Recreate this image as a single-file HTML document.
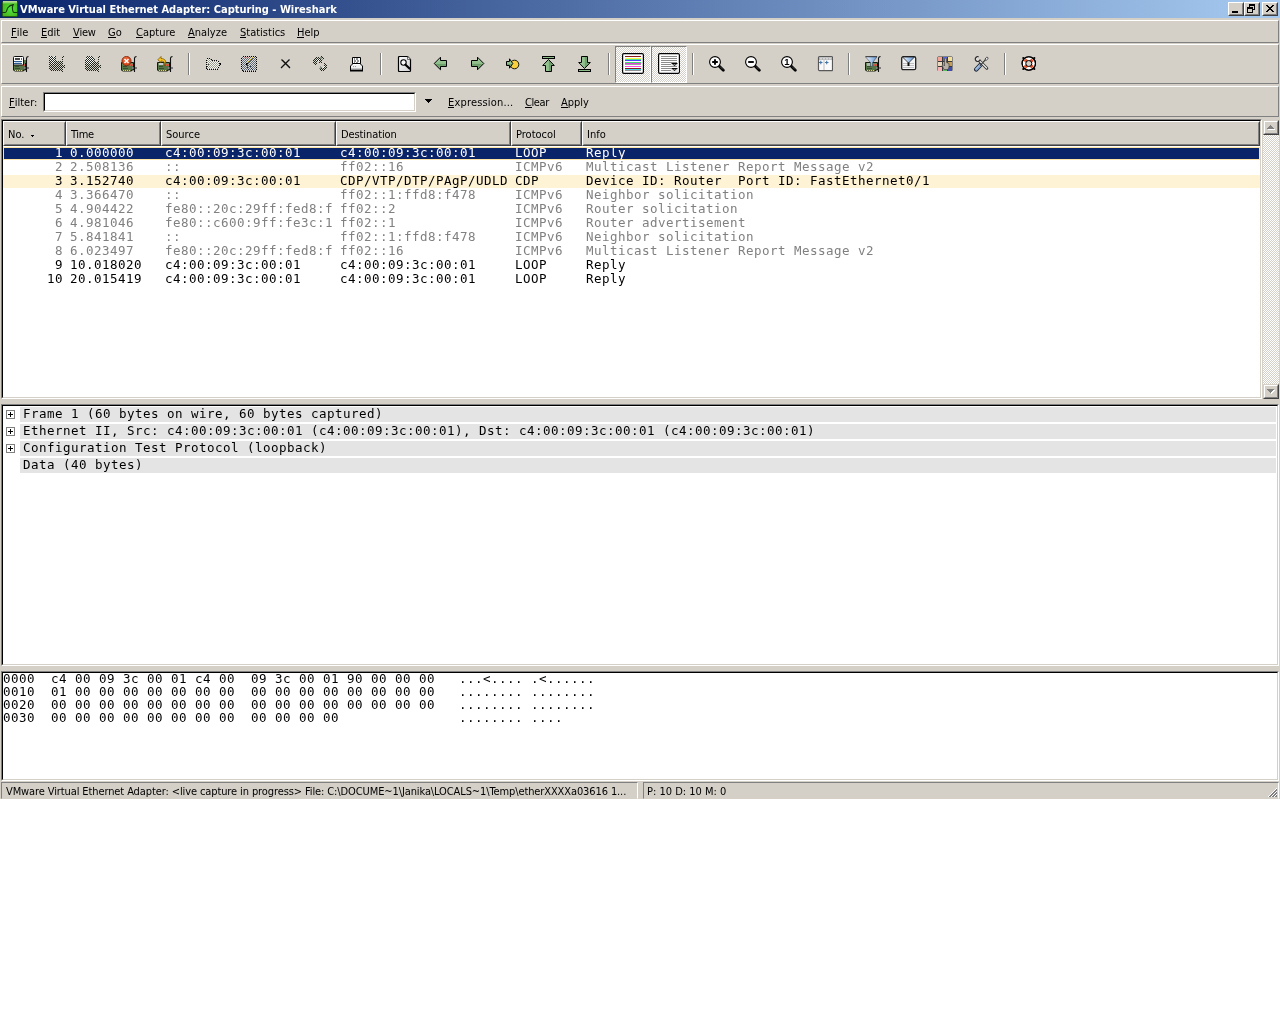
<!DOCTYPE html>
<html lang="en">
<head>
<meta charset="utf-8">
<title>VMware Virtual Ethernet Adapter: Capturing - Wireshark</title>
<style>
html,body{margin:0;padding:0;background:#fff;}
body{width:1280px;height:1024px;overflow:hidden;position:relative;font-family:"DejaVu Sans Condensed","Liberation Sans",sans-serif;font-size:11px;color:#000;}
#win{position:absolute;left:0;top:0;width:1280px;height:799px;background:#d4d0c8;overflow:hidden;transform:translateZ(0);will-change:transform;}
.abs{position:absolute;}
#title{position:absolute;left:0;top:0;width:1280px;height:18px;background:linear-gradient(to right,#0a246a 0%,#a6caf0 100%);}
#title .txt{position:absolute;left:20px;top:3px;color:#fff;font-weight:bold;font-size:11px;line-height:14px;white-space:nowrap;}
.tbtn{position:absolute;top:2px;width:16px;height:14px;background:#d4d0c8;box-sizing:border-box;border:1px solid;border-color:#fff #404040 #404040 #fff;}
.tbtn:after{content:"";position:absolute;left:0;top:0;right:0;bottom:0;border:1px solid;border-color:#d4d0c8 #808080 #808080 #d4d0c8;}
.raised{position:absolute;box-sizing:border-box;border:1px solid;border-color:#fff #808080 #808080 #fff;background:#d4d0c8;}
.sunken{position:absolute;box-sizing:border-box;border:1px solid;border-color:#808080 #fff #fff #808080;background:#fff;}
.sunken>.inner{position:absolute;left:0;top:0;right:0;bottom:0;border:1px solid;border-color:#000 #d4d0c8 #d4d0c8 #000;overflow:hidden;}
.mi{position:absolute;top:26px;line-height:13px;white-space:nowrap;}
u{text-decoration:none;position:relative;}
u:after{content:"";position:absolute;left:0;right:0;top:11px;height:1px;background:#000;}
.sep{position:absolute;top:53px;width:2px;height:22px;border-left:1px solid #808080;border-right:1px solid #fff;box-sizing:border-box;}
.hb{position:absolute;top:0;height:25px;box-sizing:border-box;background:#d4d0c8;border:1px solid;border-color:#fff #404040 #404040 #fff;}
.hb:after{content:"";position:absolute;left:0;top:0;right:0;bottom:0;border:1px solid;border-color:#d4d0c8 #808080 #808080 #d4d0c8;}
.hb span{position:absolute;left:4px;top:6px;line-height:13px;white-space:nowrap;}
.mono{font-family:"DejaVu Sans Mono","Liberation Mono",monospace;font-size:12.5px;letter-spacing:0.474px;white-space:pre;}
.row{position:absolute;left:0;width:1257px;height:13px;overflow:hidden;}
.row span{position:absolute;top:-2px;line-height:16px;}
.g{color:#808080;}
.row .c0{right:1197px;text-align:right;}
.row .c1{left:67px;}
.row .c2{left:162px;width:168px;overflow:hidden;}
.row .c3{left:337px;width:170px;overflow:hidden;}
.row .c4{left:512px;}
.row .c5{left:583px;}
.cdp{background:#fff3d6;}
.sel{background:#0a246a;color:#fff;box-sizing:border-box;border:1px solid #fbe4a4;}
.sel span{margin-top:-1px;margin-left:-1px;}
.sel .c0{margin-right:-1px;}
.tr{position:absolute;left:17px;right:1px;height:15px;background:#e4e4e4;}
.tr span{position:absolute;left:3px;top:-1px;line-height:16px;}
.exp{position:absolute;left:3px;width:9px;height:9px;box-sizing:border-box;border:1px solid #808080;background:#fff;}
.exp:before{content:"";position:absolute;left:1px;top:3px;width:5px;height:1px;background:#000;}
.exp:after{content:"";position:absolute;left:3px;top:1px;width:1px;height:5px;background:#000;}
.hx{position:absolute;left:0;line-height:13px;margin-top:-1px;}
.sbtn{position:absolute;left:0;width:16px;height:15px;box-sizing:border-box;background:#d4d0c8;border:1px solid;border-color:#d4d0c8 #404040 #404040 #d4d0c8;}
.sbtn:after{content:"";position:absolute;left:0;top:0;right:0;bottom:0;border:1px solid;border-color:#fff #808080 #808080 #fff;}
.st{position:absolute;top:782px;height:17px;box-sizing:border-box;border:1px solid;border-color:#808080 #fff #d4d0c8 #808080;}
.st span{position:absolute;left:4px;top:2px;line-height:13px;white-space:nowrap;}
</style>
</head>
<body>
<div id="win">

<!-- TITLE BAR -->
<div id="title">
  <svg class="abs" style="left:2px;top:1px" width="16" height="16" viewBox="0 0 16 16">
    <defs><radialGradient id="ig" cx="0.55" cy="0.5" r="0.6"><stop offset="0" stop-color="#50e840"/><stop offset="1" stop-color="#48b41c"/></radialGradient></defs>
    <rect x="0.5" y="0.5" width="15" height="15" rx="1.2" fill="url(#ig)" stroke="#245c10"/>
    <rect x="1" y="0" width="14" height="1" fill="#b4d890"/><rect x="1" y="1" width="14" height="1" fill="#90d470"/><rect x="1" y="2" width="14" height="1" fill="#68cc48" opacity=".7"/>
    <path d="M0 11.500H3.300C5 11.500 4.600 8.500 5.800 6.800C7.200 4.800 9 3.800 11.200 3.600C9.800 6 10.500 11.500 12.200 11.500H16" fill="none" stroke="#143c0c" stroke-width="1.100"/>
  </svg>
  <div class="txt">VMware Virtual Ethernet Adapter: Capturing - Wireshark</div>
  <div class="tbtn" style="left:1228px"><div class="abs" style="left:3px;top:8px;width:6px;height:2px;background:#000"></div></div>
  <div class="tbtn" style="left:1244px">
    <div class="abs" style="left:4px;top:1px;width:6px;height:6px;box-sizing:border-box;border:1px solid #000;border-top-width:2px"></div>
    <div class="abs" style="left:2px;top:4px;width:6px;height:6px;box-sizing:border-box;border:1px solid #000;border-top-width:2px;background:#d4d0c8"></div>
  </div>
  <div class="tbtn" style="left:1262px">
    <svg class="abs" style="left:3px;top:2px" width="8" height="7" viewBox="0 0 8 7" shape-rendering="crispEdges"><path d="M0 0h2v1h-2zM6 0h2v1h-2zM1 1h2v1h-2zM5 1h2v1h-2zM2 2h4v1h-4zM3 3h2v1h-2zM2 4h4v1h-4zM1 5h2v1h-2zM5 5h2v1h-2zM0 6h2v1h-2zM6 6h2v1h-2z" fill="#000"/></svg>
  </div>
</div>

<!-- MENU BAR -->
<div class="raised" style="left:1px;top:20px;width:1278px;height:23px"></div>
<div class="mi" style="left:11px"><u>F</u>ile</div>
<div class="mi" style="left:41px"><u>E</u>dit</div>
<div class="mi" style="left:73px;letter-spacing:-0.3px"><u>V</u>iew</div>
<div class="mi" style="left:108px"><u>G</u>o</div>
<div class="mi" style="left:136px"><u>C</u>apture</div>
<div class="mi" style="left:188px"><u>A</u>nalyze</div>
<div class="mi" style="left:240px"><u>S</u>tatistics</div>
<div class="mi" style="left:297px"><u>H</u>elp</div>

<!-- TOOLBAR -->
<div class="raised" style="left:1px;top:44px;width:1278px;height:40px"></div>
<div id="tb">
<svg width="0" height="0" style="position:absolute"><defs>
<pattern id="st" width="2" height="2" patternUnits="userSpaceOnUse"><rect x="0" y="0" width="1" height="1" fill="#20261c"/><rect x="1" y="1" width="1" height="1" fill="#20261c"/></pattern>
<pattern id="stg" width="2" height="2" patternUnits="userSpaceOnUse"><rect x="0" y="0" width="1" height="1" fill="#9c9e90"/><rect x="1" y="1" width="1" height="1" fill="#9c9e90"/><rect x="1" y="0" width="1" height="1" fill="#f6f6f2"/><rect x="0" y="1" width="1" height="1" fill="#f6f6f2"/></pattern>
<pattern id="stw" width="2" height="2" patternUnits="userSpaceOnUse"><rect x="1" y="0" width="1" height="1" fill="#fff"/><rect x="0" y="1" width="1" height="1" fill="#fff"/></pattern>
<pattern id="stb" width="2" height="2" patternUnits="userSpaceOnUse"><rect x="0" y="0" width="1" height="1" fill="#626a74"/><rect x="1" y="1" width="1" height="1" fill="#626a74"/><rect x="1" y="0" width="1" height="1" fill="#dcdcdc"/><rect x="0" y="1" width="1" height="1" fill="#dcdcdc"/></pattern>
<linearGradient id="gr" x1="0" y1="0" x2="0" y2="1"><stop offset="0" stop-color="#a8d0a4"/><stop offset="0.5" stop-color="#8cbc88"/><stop offset="0.55" stop-color="#6c9c6a"/><stop offset="1" stop-color="#86b484"/></linearGradient>
<linearGradient id="grv" x1="0" y1="0" x2="1" y2="0"><stop offset="0" stop-color="#a8d0a4"/><stop offset="0.5" stop-color="#8cbc88"/><stop offset="0.55" stop-color="#6c9c6a"/><stop offset="1" stop-color="#86b484"/></linearGradient>
<linearGradient id="fun" x1="0" y1="0" x2="1" y2="0"><stop offset="0" stop-color="#f4f8ff"/><stop offset="1" stop-color="#5c94d8"/></linearGradient>
<linearGradient id="pg" x1="0" y1="0" x2="1" y2="1"><stop offset="0" stop-color="#fff"/><stop offset="1" stop-color="#d0d0d0"/></linearGradient>
</defs></svg>
<div class="sep" style="left:188px"></div><div class="sep" style="left:380px"></div><div class="sep" style="left:608px"></div><div class="sep" style="left:692px"></div><div class="sep" style="left:848px"></div><div class="sep" style="left:1004px"></div>
<svg class="abs" style="left:13px;top:56px" width="16" height="16" viewBox="0 0 16 16" ><g><path d="M0.500 6.500h12v7.500h-2v1h-9l-1-1z" fill="#567648" stroke="#141c10" stroke-width="1"/><rect x="1" y="7" width="11" height="2" fill="#66885a"/><rect x="2" y="10" width="4" height="1" fill="#384c30"/><rect x="2" y="12" width="5" height="1" fill="#384c30"/><rect x="2" y="14" width="8" height="1" fill="#5c5c20"/><rect x="2" y="14" width="1" height="1" fill="#ecd050"/><rect x="4" y="14" width="1" height="1" fill="#ecd050"/><rect x="6" y="14" width="1" height="1" fill="#ecd050"/><rect x="8" y="14" width="1" height="1" fill="#ecd050"/><rect x="9" y="8" width="1" height="2" fill="#cc5c44"/><rect x="11" y="8" width="1" height="2" fill="#cc5c44"/><rect x="11" y="11" width="5" height="2" fill="#808080"/><rect x="12" y="11" width="2" height="2" fill="#585858"/><path d="M13.500 16V2.300q0-1.500 2-1.800" fill="none" stroke="#101010" stroke-width="1.100"/></g><path d="M11 4h2v3h-2z" fill="#567648"/><rect x="11" y="8" width="1" height="1" fill="#cc5c44"/><path d="M1.500 0.500h8q1 0 1 1v7.500h-10v-7.500q0-1 1-1z" fill="#fff" stroke="#101010"/><rect x="2" y="2" width="5" height="2" fill="#484848"/><rect x="8" y="2" width="1" height="2" fill="#707070"/><rect x="1" y="5" width="8" height="1" fill="#2c5c90"/><rect x="1" y="7" width="8" height="1" fill="#2c5c90"/><rect x="2" y="6" width="6" height="1" fill="#c4d8ec"/></svg>
<svg class="abs" style="left:49px;top:56px" width="16" height="16" viewBox="0 0 16 16" shape-rendering="crispEdges"><path d="M0 5h13v10h-12l-1-1zM13 2h1v14h-1zM13 0h2v2h-2zM14 9h2v3h-2zM0 0h3l1 2 1-2h2v5h-7z" fill="url(#st)"/><path d="M0 0h3l1 2 1-2h1v4l-1 4h-3l-1-4z" fill="url(#stw)"/></svg>
<svg class="abs" style="left:85px;top:56px" width="16" height="16" viewBox="0 0 16 16" shape-rendering="crispEdges"><path d="M0 6h13v9h-12l-1-1zM13 2h1v14h-1zM13 0h2v2h-2zM14 9h2v3h-2z" fill="url(#st)"/><circle cx="5" cy="4.500" r="4.800" fill="url(#st)"/><circle cx="5" cy="4.500" r="4.200" fill="url(#stw)"/><circle cx="5" cy="4.500" r="1.500" fill="url(#st)"/></svg>
<svg class="abs" style="left:121px;top:56px" width="16" height="16" viewBox="0 0 16 16" ><g><path d="M0.500 6.500h12v7.500h-2v1h-9l-1-1z" fill="#567648" stroke="#141c10" stroke-width="1"/><rect x="1" y="7" width="11" height="2" fill="#66885a"/><rect x="2" y="10" width="4" height="1" fill="#384c30"/><rect x="2" y="12" width="5" height="1" fill="#384c30"/><rect x="2" y="14" width="8" height="1" fill="#5c5c20"/><rect x="2" y="14" width="1" height="1" fill="#ecd050"/><rect x="4" y="14" width="1" height="1" fill="#ecd050"/><rect x="6" y="14" width="1" height="1" fill="#ecd050"/><rect x="8" y="14" width="1" height="1" fill="#ecd050"/><rect x="9" y="8" width="1" height="2" fill="#cc5c44"/><rect x="11" y="8" width="1" height="2" fill="#cc5c44"/><rect x="11" y="11" width="5" height="2" fill="#808080"/><rect x="12" y="11" width="2" height="2" fill="#585858"/><path d="M13.500 16V2.300q0-1.500 2-1.800" fill="none" stroke="#101010" stroke-width="1.100"/></g><circle cx="5.5" cy="5" r="4.6" fill="#d84a1c" stroke="#7a2408" stroke-width="0.8"/><circle cx="5" cy="4" r="3" fill="#ec6a3c" opacity="0.7"/><path d="M3.5 3l4 4M7.500 3l-4 4" stroke="#fff" stroke-width="1.5" fill="none"/></svg>
<svg class="abs" style="left:157px;top:56px" width="16" height="16" viewBox="0 0 16 16" ><g><path d="M0.500 6.500h12v7.500h-2v1h-9l-1-1z" fill="#567648" stroke="#141c10" stroke-width="1"/><rect x="1" y="7" width="11" height="2" fill="#66885a"/><rect x="2" y="10" width="4" height="1" fill="#384c30"/><rect x="2" y="12" width="5" height="1" fill="#384c30"/><rect x="2" y="14" width="8" height="1" fill="#5c5c20"/><rect x="2" y="14" width="1" height="1" fill="#ecd050"/><rect x="4" y="14" width="1" height="1" fill="#ecd050"/><rect x="6" y="14" width="1" height="1" fill="#ecd050"/><rect x="8" y="14" width="1" height="1" fill="#ecd050"/><rect x="9" y="8" width="1" height="2" fill="#cc5c44"/><rect x="11" y="8" width="1" height="2" fill="#cc5c44"/><rect x="11" y="11" width="5" height="2" fill="#808080"/><rect x="12" y="11" width="2" height="2" fill="#585858"/><path d="M13.500 16V2.300q0-1.500 2-1.800" fill="none" stroke="#101010" stroke-width="1.100"/></g><rect x="2" y="7" width="4" height="2" fill="#c8ccd0"/><path d="M4 0.500L0.800 3.800 4 6.500V5c3 0 4 1.500 3.600 5 2.400-4 1-7.500-3.600-7.500z" fill="#f8c420" stroke="#6a4a08" stroke-width="0.7"/></svg>
<svg class="abs" style="left:205px;top:56px" width="16" height="16" viewBox="0 0 16 16" shape-rendering="crispEdges"><path d="M2 3h4l2 2h5l1 2h2l-3 6h-11z" fill="url(#stg)"/><path d="M1.500 12.500V3.500l1-1h3l2 2h5l1 1v1.500" fill="none" stroke="#000" stroke-width="1" stroke-dasharray="1 1"/><path d="M1.500 12.500l2.500-5" fill="none" stroke="#444" stroke-dasharray="1 1"/><path d="M13.500 7.500h2l-3 6h-10l-1-1" fill="none" stroke="#000" stroke-dasharray="1 1"/></svg>
<svg class="abs" style="left:241px;top:56px" width="16" height="16" viewBox="0 0 16 16" shape-rendering="crispEdges"><rect x="1" y="1" width="14" height="14" fill="url(#stb)"/><path d="M1.500 0.500h13l1 1v13l-1 1h-12l-2-2v-12z" fill="none" stroke="#000" stroke-dasharray="1 1"/><rect x="3" y="1" width="5" height="1" fill="#d08080" opacity=".7"/><path d="M6 7L11.500 1.500" stroke="#d8c030" stroke-width="1.400"/><path d="M7 7.300L12 2.300" stroke="#30302c" stroke-width="0.800"/><path d="M5 8.500l1.500-1.500" stroke="#000" stroke-width="1.500"/><path d="M6.500 9l1 6M9.500 10l3 5" stroke="#203040" stroke-width="1" stroke-dasharray="1 1"/></svg>
<svg class="abs" style="left:277px;top:56px" width="16" height="16" viewBox="0 0 16 16" ><path d="M4.500 3.500l8.500 8.500M12.500 3.500l-8.500 8.500" stroke="#101010" stroke-width="1.250" fill="none"/><path d="M6 4l7 7" stroke="#000" stroke-width="0.600" opacity=".45" fill="none"/></svg>
<svg class="abs" style="left:313px;top:56px" width="16" height="16" viewBox="0 0 16 16" shape-rendering="crispEdges"><path d="M8 0l3 3-2 1v3h-3v-2h-2v3l-2 1-2-3v-3l2-2h5z" fill="url(#st)"/><path d="M8 0l2 4-3-1z" fill="#8c9488"/><path d="M3 3h4v2h-4z" fill="url(#stw)"/><path d="M11 6l3 2v4l-3 3h-3l-2-2 2-2 1 1h2v-4z" fill="url(#st)"/><path d="M8 9l-2 4 3-1z" fill="#8c9488"/><path d="M9 11l3-2v2l-2 2z" fill="url(#stw)"/></svg>
<svg class="abs" style="left:349px;top:56px" width="16" height="16" viewBox="0 0 16 16" ><path d="M3.500 1.500h8v7h-8z" fill="#fff" stroke="#000"/><path d="M5 3h1M7 3h2M5 5h2M8 5h2M5 7h1M7 7h2" stroke="#202020" stroke-width="1"/><path d="M1.500 10l2.500-2.500h7l2.500 2.500v4.500h-12z" fill="#f0f0f0" stroke="#000"/><rect x="2" y="12" width="11" height="2" fill="#c4c4c4"/><rect x="2" y="13" width="11" height="1" fill="#8c8c8c"/><rect x="4" y="10" width="1" height="1" fill="#9c9c9c"/><rect x="6" y="10" width="1" height="1" fill="#9c9c9c"/><rect x="4" y="8" width="7" height="1" fill="#fff"/><rect x="1" y="14" width="13" height="1.500" fill="#000"/></svg>
<svg class="abs" style="left:397px;top:56px" width="16" height="16" viewBox="0 0 16 16" ><path d="M1.500 1.500q0-1 1-1h8l3 3v11q0 1-1 1h-10q-1 0-1-1z" fill="url(#pg)" stroke="#000" stroke-width="1.200"/><path d="M10.500 0.500v3h3" fill="#e8e8e8" stroke="#404040" stroke-width="0.700"/><circle cx="6.500" cy="6.500" r="2.700" fill="#fafafa" stroke="#000" stroke-width="1.100"/><path d="M8.500 8.700l4 3.800" stroke="#000" stroke-width="2.200" stroke-linecap="round"/></svg>
<svg class="abs" style="left:433px;top:56px" width="16" height="16" viewBox="0 0 16 16" ><path d="M1.200 7.500L7.500 1.200V4.500H13.500V10.500H7.500V13.800z" fill="url(#gr)" stroke="#000" stroke-width="1" stroke-linejoin="miter"/></svg>
<svg class="abs" style="left:469px;top:56px" width="16" height="16" viewBox="0 0 16 16" ><path d="M14.800 7.500L8.500 1.200V4.500H2.500V10.500H8.500V13.800z" fill="url(#gr)" stroke="#000" stroke-width="1"/></svg>
<svg class="abs" style="left:505px;top:56px" width="16" height="16" viewBox="0 0 16 16" ><circle cx="9.500" cy="8.500" r="4.300" fill="#f8d040" stroke="#000" stroke-width="0.900"/><path d="M7.800 7.500L4.500 2.800V5.500H1.500V9.500H4.500V12.200z" fill="url(#gr)" stroke="#000" stroke-width="1"/></svg>
<svg class="abs" style="left:541px;top:56px" width="16" height="16" viewBox="0 0 16 16" ><rect x="1.500" y="0.500" width="12" height="2" fill="#8cbc88" stroke="#000"/><path d="M7.500 3.500L13.300 9.500H10.500V15.500H4.500V9.500H1.700z" fill="url(#grv)" stroke="#000" stroke-width="1"/></svg>
<svg class="abs" style="left:577px;top:56px" width="16" height="16" viewBox="0 0 16 16" ><rect x="1.500" y="13.500" width="12" height="2" fill="#8cbc88" stroke="#000"/><path d="M7.500 12.500L13.300 6.500H10.500V0.500H4.500V6.500H1.700z" fill="url(#grv)" stroke="#000" stroke-width="1"/></svg>
<div class="abs" style="left:615px;top:46px;width:36px;height:37px;box-sizing:border-box;border:1px solid;border-color:#808080 #fff #fff #808080;background:repeating-conic-gradient(#fff 0% 25%,#d4d0c8 0% 50%) 0 0/2px 2px"></div>
<div class="abs" style="left:651px;top:46px;width:36px;height:37px;box-sizing:border-box;border:1px solid;border-color:#808080 #fff #fff #808080;background:repeating-conic-gradient(#fff 0% 25%,#d4d0c8 0% 50%) 0 0/2px 2px"></div>
<svg class="abs" style="left:622px;top:53px" width="22" height="21" viewBox="0 0 22 21" ><rect x="0.600" y="0.600" width="20.800" height="19.800" rx="1.300" fill="#fff" stroke="#000" stroke-width="1.200"/><rect x="3" y="3" width="16" height="1" fill="#8c1c1c"/><rect x="3" y="5" width="16" height="1" fill="#f8f840"/><rect x="3" y="6" width="16" height="1" fill="#48d8a0"/><rect x="3" y="7" width="16" height="1" fill="#4848f0"/><rect x="3" y="9" width="16" height="1" fill="#40e070"/><rect x="3" y="10" width="16" height="1" fill="#e040e0"/><rect x="3" y="11" width="16" height="1" fill="#a0a0a0"/><rect x="3" y="13" width="16" height="1" fill="#f850e8"/><rect x="3" y="15" width="16" height="1" fill="#8c1c1c"/><rect x="3" y="16" width="16" height="1" fill="#40d8e8"/><rect x="3" y="17" width="16" height="1" fill="#909090"/></svg>
<svg class="abs" style="left:658px;top:53px" width="22" height="21" viewBox="0 0 22 21" ><rect x="0.600" y="0.600" width="20.800" height="19.800" rx="1.300" fill="#fff" stroke="#000" stroke-width="1.200"/><rect x="3" y="3" width="16" height="1" fill="#8c8c8c"/><rect x="3" y="5" width="16" height="1" fill="#8c8c8c"/><rect x="3" y="7" width="16" height="1" fill="#8c8c8c"/><rect x="3" y="9" width="16" height="1" fill="#8c8c8c"/><rect x="3" y="11" width="16" height="1" fill="#8c8c8c"/><rect x="3" y="13" width="16" height="1" fill="#8c8c8c"/><rect x="3" y="15" width="16" height="1" fill="#8c8c8c"/><rect x="3" y="17" width="16" height="1" fill="#8c8c8c"/><rect x="13" y="10" width="8" height="3" fill="#e8e8e8"/><rect x="13" y="15" width="8" height="4" fill="#e8e8e8"/><path d="M13 10h7l-3.500 3z" fill="#000"/><path d="M13 15h7l-3.500 3z" fill="#000"/><path d="M15.500 11.500h2" stroke="#888"/><path d="M15.500 16.500h2" stroke="#888"/></svg>
<svg class="abs" style="left:709px;top:56px" width="16" height="16" viewBox="0 0 16 16" ><path d="M10.300 10.300l4 4" stroke="#000" stroke-width="2.800" stroke-linecap="round"/><path d="M11 10.500l3 3" stroke="#666" stroke-width="0.700"/><circle cx="6" cy="6" r="5.400" fill="#fff" stroke="#000" stroke-width="1.100"/><path d="M3.200 6h5.600M6 3.200v5.600" stroke="#000" stroke-width="1.900"/></svg>
<svg class="abs" style="left:745px;top:56px" width="16" height="16" viewBox="0 0 16 16" ><path d="M10.300 10.300l4 4" stroke="#000" stroke-width="2.800" stroke-linecap="round"/><path d="M11 10.500l3 3" stroke="#666" stroke-width="0.700"/><circle cx="6" cy="6" r="5.400" fill="#fff" stroke="#000" stroke-width="1.100"/><path d="M3.200 6h5.600" stroke="#000" stroke-width="1.900"/></svg>
<svg class="abs" style="left:781px;top:56px" width="16" height="16" viewBox="0 0 16 16" ><path d="M10.300 10.300l4 4" stroke="#000" stroke-width="2.800" stroke-linecap="round"/><path d="M11 10.500l3 3" stroke="#666" stroke-width="0.700"/><circle cx="6" cy="6" r="5.400" fill="#fff" stroke="#000" stroke-width="1.100"/><text x="5.800" y="9.300" font-family="Liberation Sans, sans-serif" font-weight="bold" font-size="9.500" text-anchor="middle" fill="#000">1</text></svg>
<svg class="abs" style="left:817px;top:56px" width="16" height="16" viewBox="0 0 16 16" ><rect x="1.500" y="0.700" width="14" height="14" rx="1" fill="#fafafa" stroke="#585858" stroke-width="1.200"/><rect x="2" y="1.500" width="13" height="2.500" fill="#b4b4b4"/><rect x="3" y="2" width="2" height="1.500" fill="#d8d8d8"/><rect x="6" y="2" width="2" height="1.500" fill="#d8d8d8"/><rect x="9" y="2" width="2" height="1.500" fill="#d8d8d8"/><rect x="12" y="2" width="2" height="1.500" fill="#d8d8d8"/><rect x="6" y="4" width="2" height="10" fill="#dcdcdc"/><path d="M2 6.500h3.500M3.800 4.800v3.400M8 6.500h3.500M9.700 4.800v3.400" stroke="#4478a8" stroke-width="1.100"/></svg>
<svg class="abs" style="left:865px;top:56px" width="16" height="16" viewBox="0 0 16 16" ><g><path d="M0.500 6.500h12v7.500h-2v1h-9l-1-1z" fill="#567648" stroke="#141c10" stroke-width="1"/><rect x="1" y="7" width="11" height="2" fill="#66885a"/><rect x="2" y="10" width="4" height="1" fill="#384c30"/><rect x="2" y="12" width="5" height="1" fill="#384c30"/><rect x="2" y="14" width="8" height="1" fill="#5c5c20"/><rect x="2" y="14" width="1" height="1" fill="#ecd050"/><rect x="4" y="14" width="1" height="1" fill="#ecd050"/><rect x="6" y="14" width="1" height="1" fill="#ecd050"/><rect x="8" y="14" width="1" height="1" fill="#ecd050"/><rect x="9" y="8" width="1" height="2" fill="#cc5c44"/><rect x="11" y="8" width="1" height="2" fill="#cc5c44"/><rect x="11" y="11" width="5" height="2" fill="#808080"/><rect x="12" y="11" width="2" height="2" fill="#585858"/><path d="M13.500 16V2.300q0-1.500 2-1.800" fill="none" stroke="#101010" stroke-width="1.100"/></g><rect x="2" y="7" width="3" height="3" fill="#b0b4b0"/><path d="M0.500 0.800h11.500l-4.500 6v3.500h-1.800v-3.500z" fill="url(#fun)" stroke="#3c4c5c" stroke-width="0.600"/><path d="M0.500 0.600h11.500" stroke="#404040" stroke-width="1"/></svg>
<svg class="abs" style="left:901px;top:56px" width="16" height="16" viewBox="0 0 16 16" ><rect x="0.700" y="0.700" width="14" height="13" rx="1.500" fill="#f4f4f4" stroke="#202020" stroke-width="1.300"/><path d="M2 7.500h11M2 9.500h11M2 11.500h11" stroke="#c0c0c0" stroke-width="1"/><path d="M1.500 1l6 6 6-6z" fill="url(#fun)" stroke="#202020" stroke-width="0.800"/><rect x="6.500" y="6.500" width="2" height="3.500" fill="#101010"/></svg>
<svg class="abs" style="left:937px;top:56px" width="16" height="16" viewBox="0 0 16 16" ><rect x="0.500" y="0.500" width="15" height="14.500" rx="1" fill="#383838"/><rect x="1" y="1" width="4" height="4" fill="#f4a496"/><rect x="6" y="1" width="4" height="4" fill="#5468ec"/><rect x="11" y="1" width="4" height="4" fill="#f4e098"/><rect x="1" y="6" width="4" height="4" fill="#ecd8bc"/><rect x="6" y="6" width="4" height="4" fill="#b0a8a0"/><rect x="11" y="6" width="4" height="4" fill="#c89c54"/><rect x="1" y="11" width="4" height="4" fill="#f4b4b4"/><rect x="6" y="11" width="4" height="4" fill="#58c058"/><rect x="11" y="11" width="4" height="4" fill="#3c4cb4"/><path d="M7.500 3q0-1 1-1t1 1v3.500l2.500 1v3.500l-1 2.500h-4l-2-4.500 1-0.500 1.500 1.500z" fill="#b8b0a4" stroke="#4c4844" stroke-width="0.700"/></svg>
<svg class="abs" style="left:973px;top:56px" width="16" height="16" viewBox="0 0 16 16" ><path d="M13.300 3L8.500 7.800" stroke="#383838" stroke-width="1.100"/><ellipse cx="13.600" cy="2.700" rx="1.100" ry="1.700" transform="rotate(40 13.600 2.700)" fill="#ececec" stroke="#383838" stroke-width="0.800"/><path d="M7.800 8.600L3.200 13.400" stroke="#1c2430" stroke-width="4.300" stroke-linecap="round"/><path d="M7.700 8.700L3.300 13.300" stroke="#86a8d2" stroke-width="2.700" stroke-linecap="round"/><path d="M6.600 9L3 12.800" stroke="#b4cce8" stroke-width="0.900" stroke-linecap="round"/><path d="M6.800 5.200L13.800 12.200" stroke="#2c2c2c" stroke-width="3" stroke-linecap="round"/><path d="M6.600 5L13.600 12" stroke="#e4e4e4" stroke-width="1.500" stroke-linecap="round"/><path d="M9.500 7.200l-2.500 2.500" stroke="#303030" stroke-width="1.200"/><path d="M5.600 0.800A2.400 2.400 0 1 0 7.100 3.600" fill="none" stroke="#303030" stroke-width="1.300"/><path d="M5.300 2A1.200 1.200 0 1 0 6 3.300" fill="none" stroke="#f0f0f0" stroke-width="0.800"/></svg>
<svg class="abs" style="left:1021px;top:56px" width="16" height="16" viewBox="0 0 16 16" ><circle cx="7.800" cy="7.500" r="6.700" fill="#fff" stroke="#000" stroke-width="1.100"/><g stroke="#e4502c" stroke-width="3.400" fill="none"><path d="M3.900 3.600l2 2M11.700 3.600l-2 2M3.900 11.400l2-2M11.700 11.400l-2-2"/></g><circle cx="7.800" cy="7.500" r="6.700" fill="none" stroke="#000" stroke-width="1.100"/><circle cx="7.800" cy="7.500" r="3" fill="#d4d0c8" stroke="#000" stroke-width="1"/><g fill="#000"><circle cx="2.300" cy="2" r="1.100"/><circle cx="13.300" cy="2" r="1.100"/><circle cx="2.300" cy="13" r="1.100"/><circle cx="13.300" cy="13" r="1.100"/></g></svg>
</div>

<!-- FILTER BAR -->
<div class="raised" style="left:1px;top:86px;width:1278px;height:31px"></div>
<div class="abs" style="left:9px;top:96px;line-height:13px"><u>F</u>ilter:</div>
<div class="sunken" style="left:43px;top:92px;width:373px;height:20px"><div class="inner"></div></div>
<svg class="abs" style="left:425px;top:99px" width="7" height="4" viewBox="0 0 7 4" shape-rendering="crispEdges"><path d="M0 0h7v1h-7zM1 1h5v1h-5zM2 2h3v1h-3zM3 3h1v1h-1z" fill="#000"/></svg>
<div class="abs" style="left:448px;top:96px;line-height:13px;letter-spacing:0.17px"><u>E</u>xpression...</div>
<div class="abs" style="left:525px;top:96px;line-height:13px;letter-spacing:-0.4px"><u>C</u>lear</div>
<div class="abs" style="left:561px;top:96px;line-height:13px"><u>A</u>pply</div>

<!-- PACKET LIST -->
<div class="sunken" style="left:1px;top:119px;width:1261px;height:280px"><div class="inner" id="plist">
  <div class="hb" style="left:0;width:63px"><span>No.</span><svg class="abs" style="left:27px;top:13px" width="3" height="2" viewBox="0 0 3 2" shape-rendering="crispEdges"><path d="M0 0h3v1h-3zM1 1h1v1h-1z" fill="#000"/></svg></div>
  <div class="hb" style="left:63px;width:95px"><span style="letter-spacing:-0.4px">Time</span></div>
  <div class="hb" style="left:158px;width:175px"><span>Source</span></div>
  <div class="hb" style="left:333px;width:175px"><span style="letter-spacing:-0.1px">Destination</span></div>
  <div class="hb" style="left:508px;width:71px"><span>Protocol</span></div>
  <div class="hb" style="left:579px;width:678px"><span>Info</span></div>
  <div class="row mono sel" style="top:26px"><span class="c0">1</span><span class="c1">0.000000</span><span class="c2">c4:00:09:3c:00:01</span><span class="c3">c4:00:09:3c:00:01</span><span class="c4">LOOP</span><span class="c5">Reply</span></div>
  <div class="row mono g" style="top:40px"><span class="c0">2</span><span class="c1">2.508136</span><span class="c2">::</span><span class="c3">ff02::16</span><span class="c4">ICMPv6</span><span class="c5">Multicast Listener Report Message v2</span></div>
  <div class="row mono cdp" style="top:54px"><span class="c0">3</span><span class="c1">3.152740</span><span class="c2">c4:00:09:3c:00:01</span><span class="c3">CDP/VTP/DTP/PAgP/UDLD</span><span class="c4">CDP</span><span class="c5">Device ID: Router  Port ID: FastEthernet0/1</span></div>
  <div class="row mono g" style="top:68px"><span class="c0">4</span><span class="c1">3.366470</span><span class="c2">::</span><span class="c3">ff02::1:ffd8:f478</span><span class="c4">ICMPv6</span><span class="c5">Neighbor solicitation</span></div>
  <div class="row mono g" style="top:82px"><span class="c0">5</span><span class="c1">4.904422</span><span class="c2">fe80::20c:29ff:fed8:f478</span><span class="c3">ff02::2</span><span class="c4">ICMPv6</span><span class="c5">Router solicitation</span></div>
  <div class="row mono g" style="top:96px"><span class="c0">6</span><span class="c1">4.981046</span><span class="c2">fe80::c600:9ff:fe3c:1</span><span class="c3">ff02::1</span><span class="c4">ICMPv6</span><span class="c5">Router advertisement</span></div>
  <div class="row mono g" style="top:110px"><span class="c0">7</span><span class="c1">5.841841</span><span class="c2">::</span><span class="c3">ff02::1:ffd8:f478</span><span class="c4">ICMPv6</span><span class="c5">Neighbor solicitation</span></div>
  <div class="row mono g" style="top:124px"><span class="c0">8</span><span class="c1">6.023497</span><span class="c2">fe80::20c:29ff:fed8:f478</span><span class="c3">ff02::16</span><span class="c4">ICMPv6</span><span class="c5">Multicast Listener Report Message v2</span></div>
  <div class="row mono " style="top:138px"><span class="c0">9</span><span class="c1">10.018020</span><span class="c2">c4:00:09:3c:00:01</span><span class="c3">c4:00:09:3c:00:01</span><span class="c4">LOOP</span><span class="c5">Reply</span></div>
  <div class="row mono " style="top:152px"><span class="c0">10</span><span class="c1">20.015419</span><span class="c2">c4:00:09:3c:00:01</span><span class="c3">c4:00:09:3c:00:01</span><span class="c4">LOOP</span><span class="c5">Reply</span></div>
</div></div>

<!-- SCROLLBAR -->
<div class="abs" style="left:1263px;top:120px;width:16px;height:279px;background:repeating-conic-gradient(#fff 0% 25%,#d4d0c8 0% 50%) 0 0/2px 2px">
  <div class="sbtn" style="top:0"><svg class="abs" style="left:3px;top:4px" width="8" height="5" viewBox="0 0 8 5" shape-rendering="crispEdges"><path d="M4 1h1v1h-1zM3 2h3v1h-3zM2 3h5v1h-5zM1 4h7v1h-7z" fill="#fff"/><path d="M3 0h1v1h-1zM2 1h3v1h-3zM1 2h5v1h-5zM0 3h7v1h-7z" fill="#808080"/></svg></div>
  <div class="sbtn" style="top:264px"><svg class="abs" style="left:3px;top:4px" width="8" height="5" viewBox="0 0 8 5" shape-rendering="crispEdges"><path d="M1 1h7v1h-7zM2 2h5v1h-5zM3 3h3v1h-3zM4 4h1v1h-1z" fill="#fff"/><path d="M0 0h7v1h-7zM1 1h5v1h-5zM2 2h3v1h-3zM3 3h1v1h-1z" fill="#808080"/></svg></div>
</div>

<!-- TREE -->
<div class="sunken" style="left:1px;top:404px;width:1278px;height:262px"><div class="inner" id="tree">
  <div class="exp" style="top:4px"></div>
  <div class="tr mono" style="top:1px"><span>Frame 1 (60 bytes on wire, 60 bytes captured)</span></div>
  <div class="exp" style="top:21px"></div>
  <div class="tr mono" style="top:18px"><span>Ethernet II, Src: c4:00:09:3c:00:01 (c4:00:09:3c:00:01), Dst: c4:00:09:3c:00:01 (c4:00:09:3c:00:01)</span></div>
  <div class="exp" style="top:38px"></div>
  <div class="tr mono" style="top:35px"><span>Configuration Test Protocol (loopback)</span></div>
  <div class="tr mono" style="top:52px"><span>Data (40 bytes)</span></div>
</div></div>

<!-- HEX -->
<div class="sunken" style="left:1px;top:671px;width:1278px;height:110px"><div class="inner" id="hex">
  <div class="hx mono" style="top:0px">0000  c4 00 09 3c 00 01 c4 00  09 3c 00 01 90 00 00 00   ...&lt;.... .&lt;......</div>
  <div class="hx mono" style="top:13px">0010  01 00 00 00 00 00 00 00  00 00 00 00 00 00 00 00   ........ ........</div>
  <div class="hx mono" style="top:26px">0020  00 00 00 00 00 00 00 00  00 00 00 00 00 00 00 00   ........ ........</div>
  <div class="hx mono" style="top:39px">0030  00 00 00 00 00 00 00 00  00 00 00 00               ........ ....</div>
</div></div>

<!-- STATUS -->
<div class="st" style="left:1px;width:637px"><span style="letter-spacing:-0.107px">VMware Virtual Ethernet Adapter: &lt;live capture in progress&gt; File: C:\DOCUME~1\Janika\LOCALS~1\Temp\etherXXXXa03616 1...</span></div>
<div class="st" style="left:643px;width:636px"><span style="left:3px">P: 10 D: 10 M: 0</span></div>

<svg class="abs" style="left:1268px;top:788px" width="9" height="9" viewBox="0 0 9 9" shape-rendering="crispEdges"><path d="M0 8h1v1h-1zM1 7h1v1h-1zM2 6h1v1h-1zM3 5h1v1h-1zM3 8h1v1h-1zM4 4h1v1h-1zM4 7h1v1h-1zM5 3h1v1h-1zM5 6h1v1h-1zM6 2h1v1h-1zM6 5h1v1h-1zM6 8h1v1h-1zM7 1h1v1h-1zM7 4h1v1h-1zM7 7h1v1h-1zM8 0h1v1h-1zM8 3h1v1h-1zM8 6h1v1h-1z" fill="#fff"/><path d="M1 8h1v1h-1zM2 7h1v1h-1zM2 8h1v1h-1zM3 6h1v1h-1zM3 7h1v1h-1zM4 5h1v1h-1zM4 6h1v1h-1zM4 8h1v1h-1zM5 4h1v1h-1zM5 5h1v1h-1zM5 7h1v1h-1zM5 8h1v1h-1zM6 3h1v1h-1zM6 4h1v1h-1zM6 6h1v1h-1zM6 7h1v1h-1zM7 2h1v1h-1zM7 3h1v1h-1zM7 5h1v1h-1zM7 6h1v1h-1zM7 8h1v1h-1zM8 1h1v1h-1zM8 2h1v1h-1zM8 4h1v1h-1zM8 5h1v1h-1zM8 7h1v1h-1zM8 8h1v1h-1z" fill="#808080"/></svg>
</div>
</body>
</html>
